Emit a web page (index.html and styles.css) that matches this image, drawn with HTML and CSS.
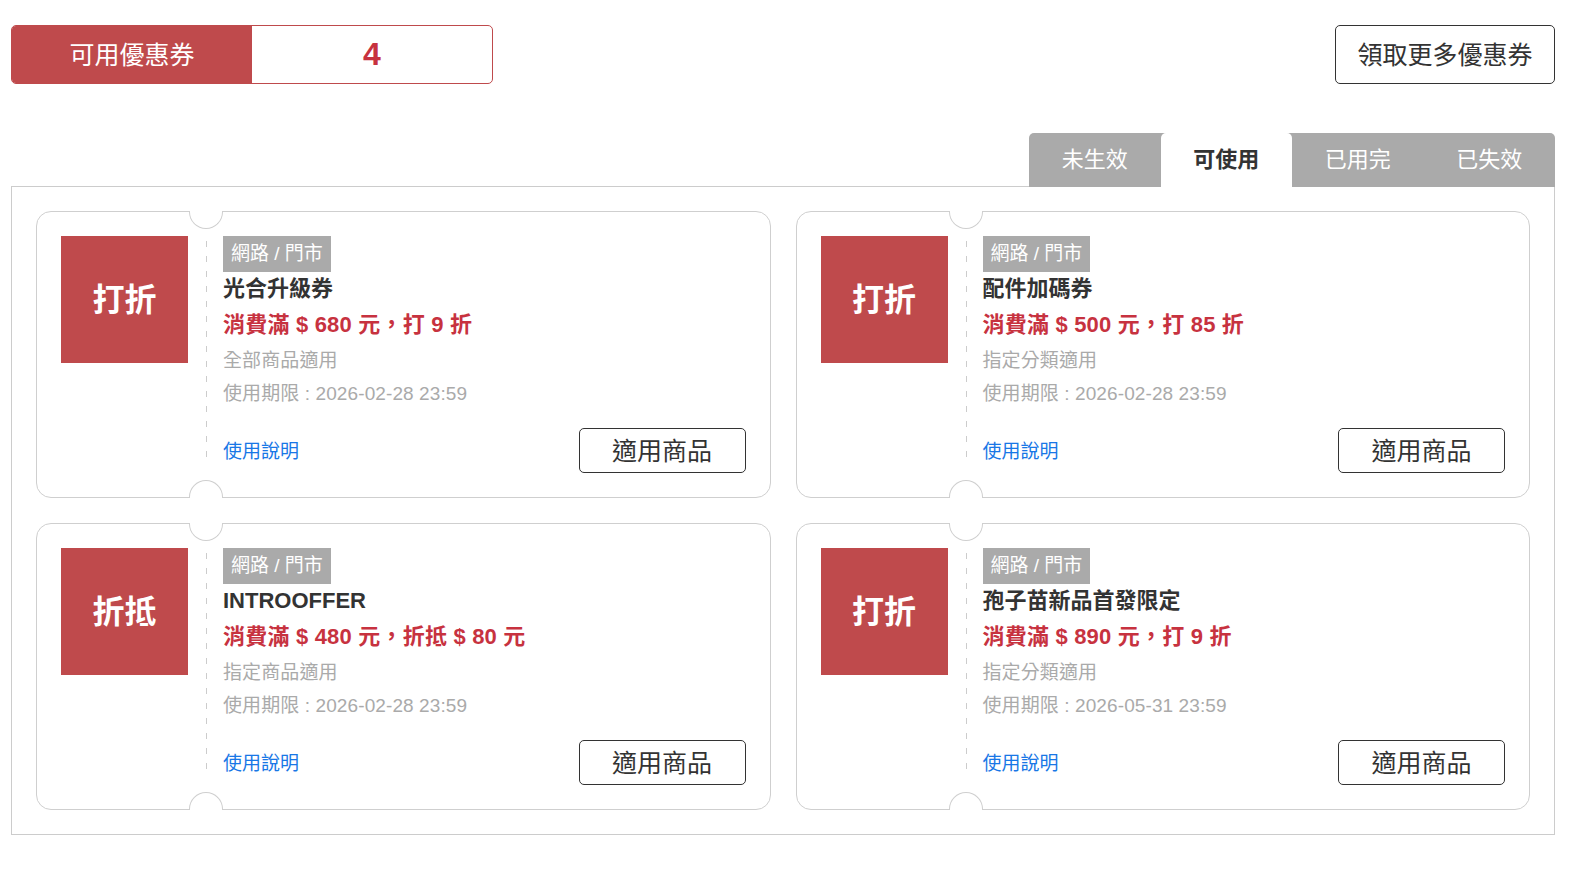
FILE: index.html
```html
<!DOCTYPE html>
<html lang="zh-Hant">
<head>
<meta charset="utf-8">
<title>優惠券</title>
<link rel="stylesheet" href="styles.css">
</head>
<body>
<div class="page">
  <div class="topbar">
    <div class="count-box">
      <div class="count-label">可用優惠券</div>
      <div class="count-num">4</div>
    </div>
    <button class="more-btn">領取更多優惠券</button>
  </div>

  <div class="tabs">
    <div class="tab-group">
      <div class="tab">未生效</div>
      <div class="tab active">可使用</div>
      <div class="tab">已用完</div>
      <div class="tab">已失效</div>
    </div>
  </div>

  <div class="panel">
    <div class="grid">
      <div class="card">
        <span class="notch top"></span><span class="notch bottom"></span>
        <div class="badge">打折</div>
        <div class="divider"></div>
        <div class="info">
          <span class="tag">網路 / 門市</span>
          <div class="title">光合升級券</div>
          <div class="offer">消費滿 $ 680 元，打 9 折</div>
          <div class="meta scope">全部商品適用</div>
          <div class="meta">使用期限 : 2026-02-28 23:59</div>
          <div class="actions">
            <a class="link">使用說明</a>
            <button class="apply-btn">適用商品</button>
          </div>
        </div>
      </div>

      <div class="card">
        <span class="notch top"></span><span class="notch bottom"></span>
        <div class="badge">打折</div>
        <div class="divider"></div>
        <div class="info">
          <span class="tag">網路 / 門市</span>
          <div class="title">配件加碼券</div>
          <div class="offer">消費滿 $ 500 元，打 85 折</div>
          <div class="meta scope">指定分類適用</div>
          <div class="meta">使用期限 : 2026-02-28 23:59</div>
          <div class="actions">
            <a class="link">使用說明</a>
            <button class="apply-btn">適用商品</button>
          </div>
        </div>
      </div>

      <div class="card">
        <span class="notch top"></span><span class="notch bottom"></span>
        <div class="badge">折抵</div>
        <div class="divider"></div>
        <div class="info">
          <span class="tag">網路 / 門市</span>
          <div class="title">INTROOFFER</div>
          <div class="offer">消費滿 $ 480 元，折抵 $ 80 元</div>
          <div class="meta scope">指定商品適用</div>
          <div class="meta">使用期限 : 2026-02-28 23:59</div>
          <div class="actions">
            <a class="link">使用說明</a>
            <button class="apply-btn">適用商品</button>
          </div>
        </div>
      </div>

      <div class="card">
        <span class="notch top"></span><span class="notch bottom"></span>
        <div class="badge">打折</div>
        <div class="divider"></div>
        <div class="info">
          <span class="tag">網路 / 門市</span>
          <div class="title">孢子苗新品首發限定</div>
          <div class="offer">消費滿 $ 890 元，打 9 折</div>
          <div class="meta scope">指定分類適用</div>
          <div class="meta">使用期限 : 2026-05-31 23:59</div>
          <div class="actions">
            <a class="link">使用說明</a>
            <button class="apply-btn">適用商品</button>
          </div>
        </div>
      </div>
    </div>
  </div>
</div>
</body>
</html>
```

FILE: styles.css
```css
* { box-sizing: border-box; }

body {
  margin: 0;
  background: #fff;
  font-family: "Liberation Sans", "Noto Sans CJK TC", sans-serif;
  color: #333;
}

.page {
  width: 1544px;
  margin-left: 11px;
  padding-top: 25px;
}

.topbar {
  display: flex;
  justify-content: space-between;
  height: 59px;
}

.count-box {
  display: flex;
  width: 482px;
  height: 59px;
  border: 1px solid #bf4a4c;
  border-radius: 5px;
  overflow: hidden;
}

.count-label {
  width: 240px;
  background: #bf4a4c;
  color: #fff;
  font-size: 25px;
  display: flex;
  align-items: center;
  justify-content: center;
  padding-bottom: 4px;
}

.count-num {
  flex: 1;
  display: flex;
  align-items: center;
  justify-content: center;
  color: #c7323f;
  font-size: 32px;
  font-weight: bold;
}

.more-btn {
  width: 220px;
  height: 59px;
  border: 1px solid #333;
  border-radius: 5px;
  background: #fff;
  color: #333;
  font-family: inherit;
  font-size: 25px;
  padding: 0 0 4px;
}

.tabs {
  display: flex;
  justify-content: flex-end;
  margin-top: 49px;
  margin-bottom: -1px;
  position: relative;
  z-index: 1;
}

.tab-group {
  display: flex;
  background: #aaa;
  border-radius: 5px 5px 0 0;
}

.tab {
  width: 131.5px;
  height: 54px;
  line-height: 54px;
  text-align: center;
  color: #fff;
  font-size: 22px;
}

.tab.active {
  background: #fff;
  color: #333;
  font-weight: bold;
  border-radius: 5px 5px 0 0;
}

.panel {
  border: 1px solid #ccc;
  padding: 24px;
}

.grid {
  display: grid;
  grid-template-columns: 1fr 1fr;
  gap: 25px;
}

.card {
  position: relative;
  height: 287px;
  border: 1px solid #cfcfcf;
  border-radius: 15px;
  padding: 24px;
  display: flex;
}

.notch {
  position: absolute;
  left: 152px;
  width: 34px;
  height: 18px;
  background: #fff;
  border: 1px solid #cfcfcf;
}

.notch.top {
  top: -1px;
  border-top: none;
  border-radius: 0 0 17px 17px;
}

.notch.bottom {
  bottom: -1px;
  border-bottom: none;
  border-radius: 17px 17px 0 0;
}

.badge {
  width: 127px;
  height: 127px;
  flex: none;
  background: #bf4a4c;
  color: #fff;
  font-size: 32px;
  font-weight: bold;
  display: flex;
  align-items: center;
  justify-content: center;
  padding-bottom: 6px;
}

.divider {
  width: 1px;
  flex: none;
  margin: 5px 16px 14px 18px;
  background: repeating-linear-gradient(to bottom, #ccc 0 6px, transparent 6px 15px);
}

.info {
  flex: 1;
  display: flex;
  flex-direction: column;
  align-items: flex-start;
}

.tag {
  background: #aaa;
  color: #fff;
  font-size: 19px;
  line-height: 36px;
  height: 36px;
  padding: 0 8px;
}

.title {
  margin-top: 2px;
  font-size: 22px;
  font-weight: bold;
  line-height: 30px;
  color: #333;
}

.offer {
  margin-top: 6px;
  font-size: 22px;
  font-weight: bold;
  line-height: 30px;
  color: #c7323f;
  letter-spacing: 0.2px;
}

.meta {
  margin-top: 7px;
  font-size: 19px;
  line-height: 26px;
  color: #aaa;
  letter-spacing: 0.1px;
}

.meta.scope {
  margin-top: 8px;
}

.actions {
  margin-top: auto;
  align-self: stretch;
  display: flex;
  justify-content: space-between;
  align-items: center;
}

.link {
  color: #1877e6;
  font-size: 19px;
  cursor: pointer;
  margin-bottom: 2px;
}

.apply-btn {
  width: 167px;
  height: 45px;
  border: 1px solid #333;
  border-radius: 5px;
  background: #fff;
  color: #333;
  font-family: inherit;
  font-size: 25px;
  padding: 0 0 4px;
}
```
